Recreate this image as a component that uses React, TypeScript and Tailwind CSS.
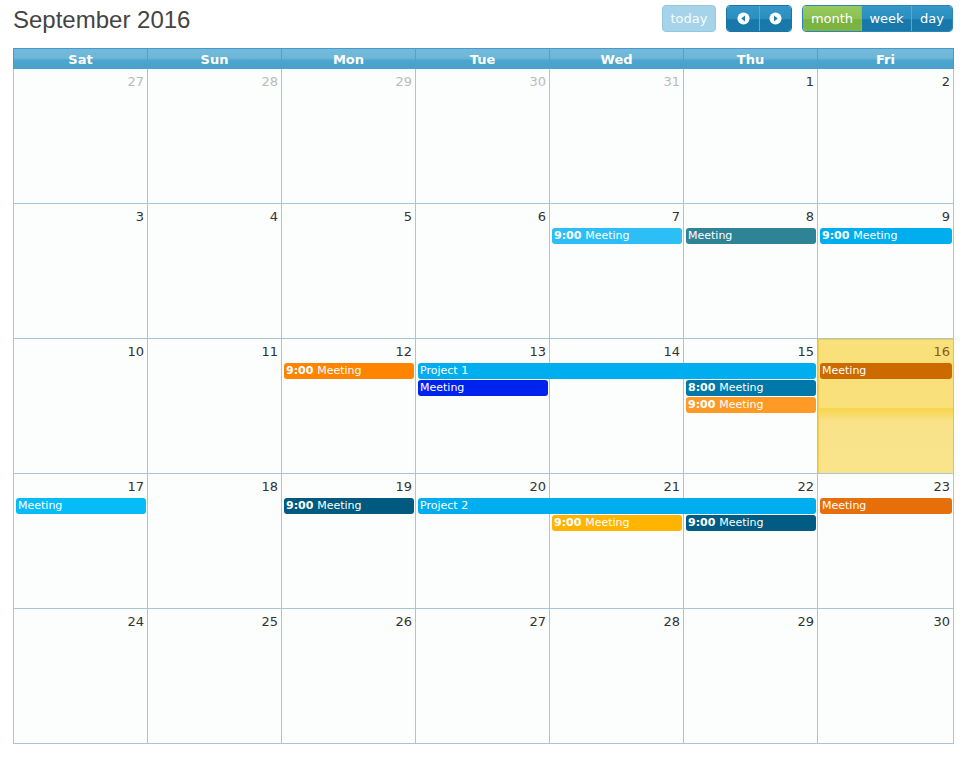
import React from 'react';

type Day = { n: number; other?: boolean; today?: boolean };
type Ev = { col: number; span?: number; row: number; color: string; time?: string; title: string };

const colStart = ['col-start-1', 'col-start-2', 'col-start-3', 'col-start-4', 'col-start-5', 'col-start-6', 'col-start-7'];
const colSpan = ['col-span-1', 'col-span-2', 'col-span-3'];
const rowStart = ['row-start-2', 'row-start-3', 'row-start-4'];

const dayNames = ['Sat', 'Sun', 'Mon', 'Tue', 'Wed', 'Thu', 'Fri'];

const weeks: { days: Day[]; events: Ev[] }[] = [
  {
    days: [
      { n: 27, other: true },
      { n: 28, other: true },
      { n: 29, other: true },
      { n: 30, other: true },
      { n: 31, other: true },
      { n: 1 },
      { n: 2 },
    ],
    events: [],
  },
  {
    days: [3, 4, 5, 6, 7, 8, 9].map((n) => ({ n })),
    events: [
      { col: 4, row: 0, color: 'bg-[#2cbef5]', time: '9:00', title: 'Meeting' },
      { col: 5, row: 0, color: 'bg-[#2f8397]', title: 'Meeting' },
      { col: 6, row: 0, color: 'bg-[#00aeef]', time: '9:00', title: 'Meeting' },
    ],
  },
  {
    days: [10, 11, 12, 13, 14, 15, 16].map((n) => ({ n, today: n === 16 })),
    events: [
      { col: 2, row: 0, color: 'bg-[#ff8400]', time: '9:00', title: 'Meeting' },
      { col: 3, span: 3, row: 0, color: 'bg-[#00aeef]', title: 'Project 1' },
      { col: 3, row: 1, color: 'bg-[#0022ee]', title: 'Meeting' },
      { col: 5, row: 1, color: 'bg-[#0079aa]', time: '8:00', title: 'Meeting' },
      { col: 5, row: 2, color: 'bg-[#ff9a26]', time: '9:00', title: 'Meeting' },
      { col: 6, row: 0, color: 'bg-[#cc6a00]', title: 'Meeting' },
    ],
  },
  {
    days: [17, 18, 19, 20, 21, 22, 23].map((n) => ({ n })),
    events: [
      { col: 0, row: 0, color: 'bg-[#05bcf7]', title: 'Meeting' },
      { col: 2, row: 0, color: 'bg-[#005a7f]', time: '9:00', title: 'Meeting' },
      { col: 3, span: 3, row: 0, color: 'bg-[#00aeef]', title: 'Project 2' },
      { col: 4, row: 1, color: 'bg-[#ffb500]', time: '9:00', title: 'Meeting' },
      { col: 5, row: 1, color: 'bg-[#005c82]', time: '9:00', title: 'Meeting' },
      { col: 6, row: 0, color: 'bg-[#e76f09]', title: 'Meeting' },
    ],
  },
  {
    days: [24, 25, 26, 27, 28, 29, 30].map((n) => ({ n })),
    events: [],
  },
];

const blueBtn =
  'bg-[linear-gradient(to_bottom,#3398c8_0%,#2a8fc0_50%,#1977aa_55%,#1a79ab_100%)]';

function Arrow({ dir }: { dir: 'left' | 'right' }) {
  return (
    <svg width="13" height="13" viewBox="0 0 14 14">
      <circle cx="7" cy="7" r="6.5" fill="#ffffff" />
      {dir === 'left' ? (
        <path d="M8.6 3.8 L4.6 7 L8.6 10.2 Z" fill="#1f7fb3" />
      ) : (
        <path d="M5.4 3.8 L9.4 7 L5.4 10.2 Z" fill="#1f7fb3" />
      )}
    </svg>
  );
}

export default function App() {
  return (
    <div className="w-[966px] h-[765px] bg-white pl-[13px] pr-[13px] pt-[5px] font-['DejaVu_Sans',Verdana,sans-serif]">
      {/* Toolbar */}
      <div className="flex items-center h-[27px]">
        <h2 className="font-['Liberation_Sans',Arial,sans-serif] text-[24px] text-[#444] leading-none mt-[3px]">
          September 2016
        </h2>
        <div className="ml-auto flex items-center gap-[10px] text-[13px] text-white">
          <button className="h-[27px] w-[54px] pt-[1px] rounded-[4px] border border-[#93c8e1] bg-[#a5d3e9] text-white/90">
            today
          </button>
          <div className="flex h-[27px] rounded-[4px] overflow-hidden border border-[#1c74a6]">
            <button className={`w-[32px] flex items-center justify-center ${blueBtn}`}>
              <Arrow dir="left" />
            </button>
            <button className={`w-[32px] flex items-center justify-center border-l border-[#5aa8d2] ${blueBtn}`}>
              <Arrow dir="right" />
            </button>
          </div>
          <div className="flex h-[27px] rounded-[4px] overflow-hidden border border-[#2a86b8]">
            <button className="w-[59px] pt-[1px] border-r border-[#86bd4a] bg-[linear-gradient(to_bottom,#97c95e_0%,#8cc152_50%,#7ab23f_55%,#7db443_100%)]">
              month
            </button>
            <button className={`w-[50px] pt-[1px] border-r border-[#5aa8d2] ${blueBtn}`}>week</button>
            <button className={`w-[40px] pt-[1px] ${blueBtn}`}>day</button>
          </div>
        </div>
      </div>

      {/* Calendar */}
      <div className="mt-[16px] w-[941px]">
        <div className="grid grid-cols-[repeat(6,134px)_1fr] h-[21px] border border-b-0 border-[#4a97cf] bg-[linear-gradient(to_bottom,#74bbda_0%,#6db6d7_45%,#4ba5ce_58%,#47a1cb_100%)]">
          {dayNames.map((d, i) => (
            <div
              key={d}
              className={`flex items-center justify-center text-[13px] font-bold text-white leading-none ${
                i < 6 ? 'border-r border-[#4f9fd0]' : ''
              }`}
            >
              {d}
            </div>
          ))}
        </div>
        <div className="border-l border-[#a8c5da]">
          {weeks.map((w, wi) => (
            <div key={wi} className="grid grid-cols-[repeat(6,134px)_1fr] grid-rows-[24px_17px_17px_17px_1fr] h-[135px]">
              {w.days.map((d, i) => (
                <div
                  key={i}
                  className={`${colStart[i]} row-start-1 row-span-5 border-r border-b border-[#a8c5da] text-right pr-[3px] pt-[5px] text-[13px] leading-[16px] ${
                    d.today
                      ? 'bg-[linear-gradient(to_bottom,#fae07a_0%,#fae07a_51%,#f7d54a_52%,#f9e28a_61%,#fae48a_100%)] shadow-[inset_1px_1px_0_#f2cf48] text-[#8a5a12]'
                      : d.other
                      ? 'bg-[#fcfdfd] text-[#bbbbbb]'
                      : 'bg-[#fcfdfd] text-[#333333]'
                  }`}
                >
                  {d.n}
                </div>
              ))}
              {w.events.map((e, ei) => (
                <div
                  key={ei}
                  className={`${colStart[e.col]} ${colSpan[(e.span ?? 1) - 1]} ${rowStart[e.row]} ${e.color} self-start h-[16px] ml-[2px] mr-[2px] rounded-[3px] px-[2px] text-[11px] leading-[16px] text-white whitespace-nowrap overflow-hidden`}
                >
                  {e.time && <span className="font-bold">{e.time} </span>}
                  {e.title}
                </div>
              ))}
            </div>
          ))}
        </div>
      </div>
    </div>
  );
}
